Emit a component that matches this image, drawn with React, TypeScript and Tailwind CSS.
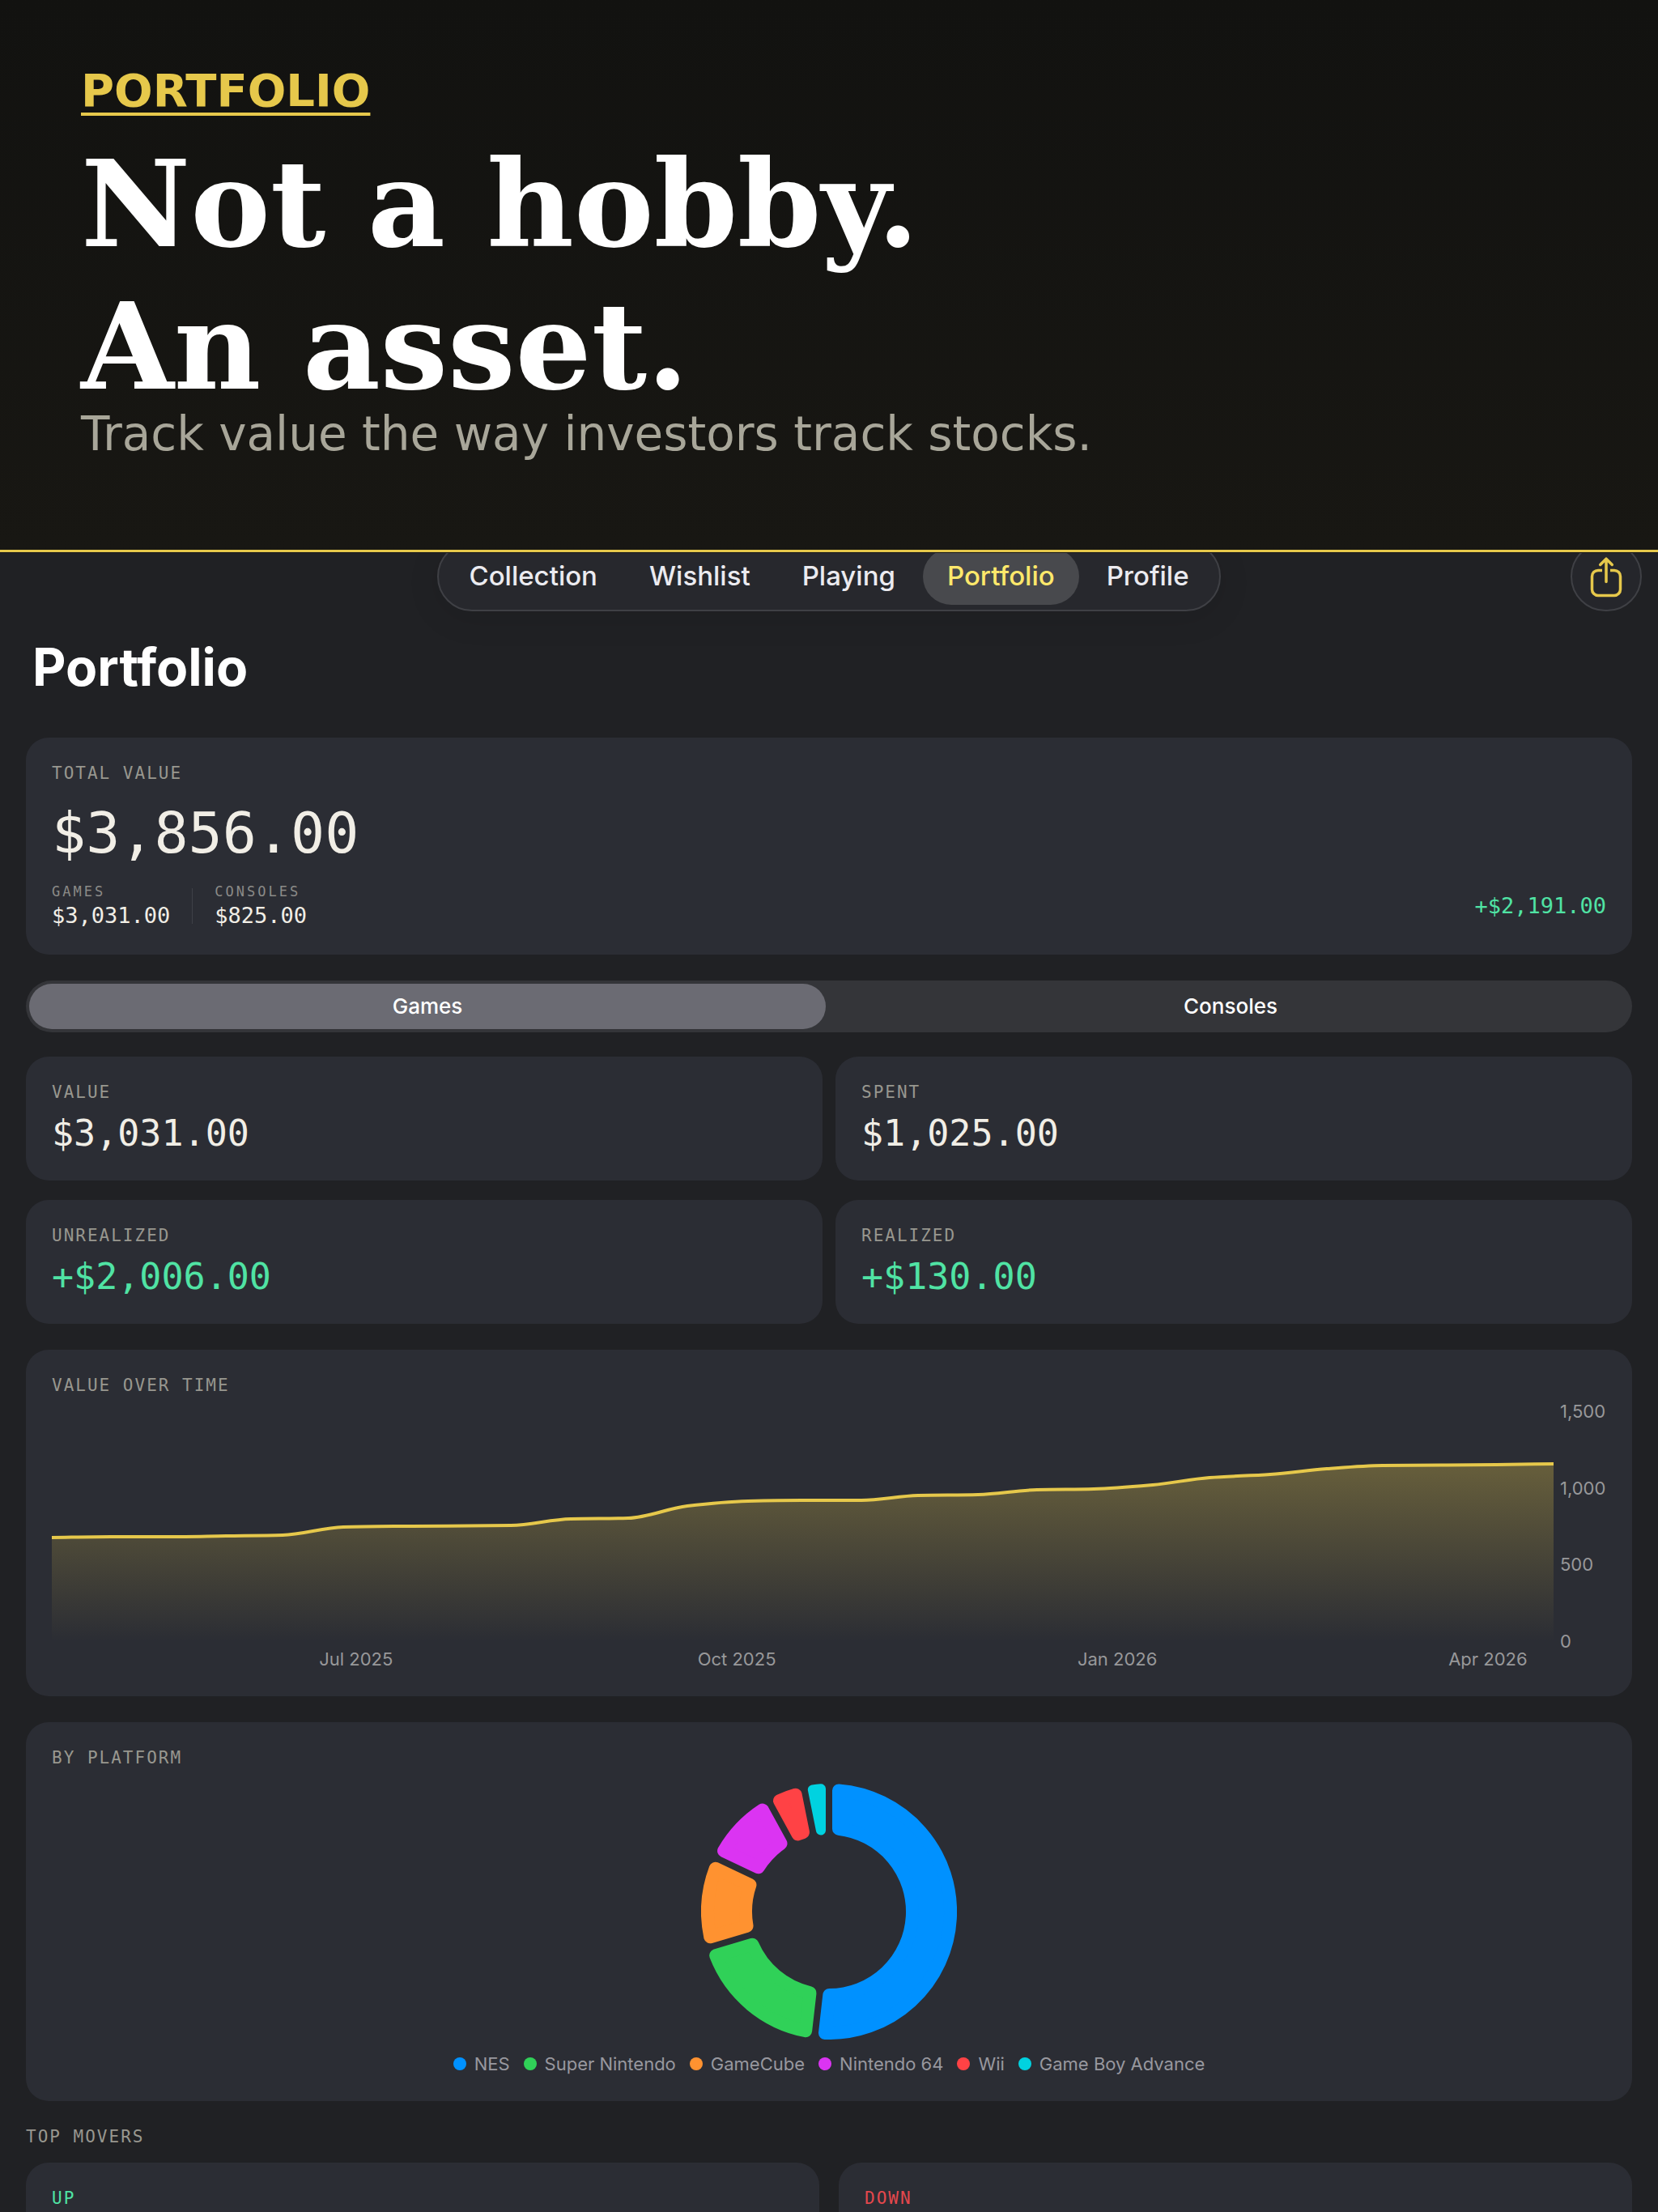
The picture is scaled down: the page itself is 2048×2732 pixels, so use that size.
import { useState } from 'react';

const NAV_ITEMS = ['Collection', 'Wishlist', 'Playing', 'Portfolio', 'Profile'];

const STATS = [
  { label: 'Value', value: '$3,031.00', gain: false },
  { label: 'Spent', value: '$1,025.00', gain: false },
  { label: 'Unrealized', value: '+$2,006.00', gain: true },
  { label: 'Realized', value: '+$130.00', gain: true },
];

// x and y in chart pixels, y measured down from the 1,500 mark
const HISTORY: [number, number][] = [
  [0, 156], [73, 155], [145, 155], [215, 154], [285, 153], [360, 143], [432, 142], [567, 141],
  [641, 133], [712, 132], [785, 117], [860, 111], [926, 110], [1000, 110], [1070, 104],
  [1144, 103], [1217, 97], [1287, 96], [1360, 91], [1430, 82], [1505, 78], [1575, 71],
  [1644, 67], [1784, 66], [1855, 65],
];

// angles are clockwise degrees from the top
const PLATFORMS = [
  { name: 'NES', start: 0, end: 186.5, fill: '#0091ff' },
  { name: 'Super Nintendo', start: 186.5, end: 253.4, fill: '#30d158' },
  { name: 'GameCube', start: 253.4, end: 295.4, fill: '#ff9230' },
  { name: 'Nintendo 64', start: 295.4, end: 331.4, fill: '#db34f2' },
  { name: 'Wii', start: 331.4, end: 348.6, fill: '#ff4245' },
  { name: 'Game Boy Advance', start: 348.6, end: 360, fill: '#00d2e0' },
];

// Monotone cubic through the points, so flat stretches never overshoot
function smoothPath(points: [number, number][]) {
  const slopes = points.slice(1).map(([x, y], i) => (y - points[i][1]) / (x - points[i][0]));
  const tangents = points.map((_, i) => {
    if (i === 0) return slopes[0];
    if (i === points.length - 1) return slopes[i - 1];
    const a = slopes[i - 1];
    const b = slopes[i];
    return a * b <= 0 ? 0 : (2 * a * b) / (a + b);
  });
  return points.reduce((path, [x, y], i) => {
    if (i === 0) return `M${x} ${y}`;
    const [px, py] = points[i - 1];
    const step = (x - px) / 3;
    const c1 = `${px + step} ${py + tangents[i - 1] * step}`;
    const c2 = `${x - step} ${y - tangents[i] * step}`;
    return `${path} C${c1} ${c2} ${x} ${y}`;
  }, '');
}

const OUTER = 158;
const INNER = 95;
const HALF_GAP = 4;

// The wedge is inset by the corner radius, then stroked with round joins to get it back
function wedge(startDeg: number, endDeg: number) {
  const start = (startDeg * Math.PI) / 180;
  const end = (endDeg * Math.PI) / 180;
  const innerHalf = INNER * Math.sin(Math.min(end - start, 1) / 2) - HALF_GAP;
  const corner = Math.min(8, innerHalf + 0.6);
  const edge = HALF_GAP + corner;
  const point = (radius: number, angle: number) =>
    `${(radius * Math.sin(angle)).toFixed(2)} ${(-radius * Math.cos(angle)).toFixed(2)}`;
  const ro = OUTER - corner;
  const ri = INNER + corner;
  const ao = Math.asin(edge / ro);
  const ai = Math.asin(edge / ri);
  const isLarge = (inset: number) => (end - start - 2 * inset > Math.PI ? 1 : 0);
  const d = [
    `M${point(ro, start + ao)}`,
    `A${ro} ${ro} 0 ${isLarge(ao)} 1 ${point(ro, end - ao)}`,
    `L${point(ri, end - ai)}`,
    `A${ri} ${ri} 0 ${isLarge(ai)} 0 ${point(ri, start + ai)}`,
    'Z',
  ].join(' ');
  return { d, corner };
}

function CardLabel({ children, tone = 'text-[#98978f]' }: { children: string; tone?: string }) {
  return (
    <h2 className={`font-['DejaVu_Sans_Mono',monospace] text-[21px] leading-6 tracking-[2px] uppercase ${tone}`}>
      {children}
    </h2>
  );
}

function Hero() {
  return (
    <header className="border-b-3 border-[#e6c84b] bg-linear-to-b from-[#121210] to-[#181713] px-[100px] pt-20 pb-[123px]">
      <p className="font-['DejaVu_Sans',sans-serif] text-[56px] leading-[64px] font-bold text-[#e6c84b] underline decoration-4 underline-offset-8">
        PORTFOLIO
      </p>
      <h1 className="mt-5 font-['DejaVu_Serif',serif] text-[148px] leading-[176px] font-bold text-white">
        Not a hobby.
        <br />
        An asset.
      </h1>
      <p className="font-['DejaVu_Sans',sans-serif] text-[58px] leading-10 text-[#a8a699]">
        Track value the way investors track stocks.
      </p>
    </header>
  );
}

function TopBar() {
  return (
    <div className="-mt-[14px] grid grid-cols-[1fr_auto_1fr] items-center px-5">
      <nav className="col-start-2 flex h-[86px] items-center gap-1 rounded-full border-2 border-[#3f4045] bg-[#27282d] px-[7px] shadow-[0_8px_40px_rgba(0,0,0,0.1)]">
        {NAV_ITEMS.map((item) => (
          <a
            key={item}
            href={`#${item.toLowerCase()}`}
            className={`flex h-[70px] items-center rounded-full px-[30px] text-[33px] font-medium ${
              item === 'Portfolio' ? 'bg-[#48494d] text-[#ffe86b]' : 'text-[#ebebf0]'
            }`}
          >
            {item}
          </a>
        ))}
      </nav>
      <button
        type="button"
        aria-label="Share"
        className="flex h-[86px] w-[88px] items-center justify-center justify-self-end rounded-full border-2 border-[#3f4045] bg-[#25262b]"
      >
        <svg viewBox="0 0 40 52" className="h-[52px] w-10" fill="none" stroke="#e6c84b" strokeWidth="3.5" strokeLinecap="round" strokeLinejoin="round">
          <path strokeLinecap="butt" d="M15 18.4H10a7.5 7.5 0 0 0-7.5 7.5v16a7.5 7.5 0 0 0 7.5 7.5h20a7.5 7.5 0 0 0 7.5-7.5v-16a7.5 7.5 0 0 0-7.5-7.5h-5" />
          <path d="M20 32.5V4.5M12.7 11.5 20 4.2l7.3 7.3" />
        </svg>
      </button>
    </div>
  );
}

function TotalCard() {
  return (
    <section className="rounded-[28px] bg-[#2b2d34] p-8">
      <CardLabel>Total value</CardLabel>
      <p className="mt-5 font-['DejaVu_Sans_Mono',monospace] text-[70px] leading-[84px] text-[#f1eee6]">$3,856.00</p>
      <div className="mt-5 flex items-center justify-between font-['DejaVu_Sans_Mono',monospace]">
        <dl className="flex items-center">
          <div className="flex flex-col gap-1 pr-[27px]">
            <dt className="text-[17px] leading-5 tracking-[3px] text-[#8b8b88]">GAMES</dt>
            <dd className="text-[27px] leading-8 text-[#f1eee6]">$3,031.00</dd>
          </div>
          <div className="h-11 w-px bg-[#3f4147]" />
          <div className="flex flex-col gap-1 pl-[27px]">
            <dt className="text-[17px] leading-5 tracking-[3px] text-[#8b8b88]">CONSOLES</dt>
            <dd className="text-[27px] leading-8 text-[#f1eee6]">$825.00</dd>
          </div>
        </dl>
        <p className="text-[27px] leading-8 text-[#50e3a4]">+$2,191.00</p>
      </div>
    </section>
  );
}

function Segments() {
  const [active, setActive] = useState('Games');
  return (
    <div className="mt-8 grid h-16 grid-cols-2 gap-2 rounded-full bg-[#343539] p-1">
      {['Games', 'Consoles'].map((name) => (
        <button
          key={name}
          type="button"
          aria-pressed={active === name}
          onClick={() => setActive(name)}
          className={`rounded-full text-[26px] leading-8 font-medium text-white ${active === name ? 'bg-[#6b6b73]' : ''}`}
        >
          {name}
        </button>
      ))}
    </div>
  );
}

function StatGrid() {
  return (
    <div className="mt-[30px] grid grid-cols-2 gap-x-4 gap-y-6">
      {STATS.map((stat) => (
        <section key={stat.label} className="flex flex-col gap-3 rounded-[28px] bg-[#2b2d34] p-8">
          <CardLabel>{stat.label}</CardLabel>
          <p className={`font-['DejaVu_Sans_Mono',monospace] text-[45px] leading-[53px] ${stat.gain ? 'text-[#50e3a4]' : 'text-[#f1eee6]'}`}>
            {stat.value}
          </p>
        </section>
      ))}
    </div>
  );
}

function HistoryCard() {
  const line = smoothPath(HISTORY);
  return (
    <section className="mt-8 rounded-[28px] bg-[#2b2d34] p-8">
      <CardLabel>Value over time</CardLabel>
      <div className="mt-5 grid grid-cols-[1fr_57px] gap-x-2 text-[22px] text-[#98989a]">
        <svg viewBox="0 0 1855 284" preserveAspectRatio="none" className="h-[284px] w-full overflow-visible" role="img" aria-label="Value over time chart">
          <defs>
            <linearGradient id="fade" x1="0" y1="65" x2="0" y2="284" gradientUnits="userSpaceOnUse">
              <stop offset="0" stopColor="#e6c84b" stopOpacity="0.32" />
              <stop offset="1" stopColor="#e6c84b" stopOpacity="0" />
            </linearGradient>
          </defs>
          <path d={`${line} V284 H0 Z`} fill="url(#fade)" />
          <path d={line} fill="none" stroke="#e6c84b" strokeWidth="4" />
        </svg>
        <div className="-my-3 flex flex-col justify-between leading-6">
          <span>1,500</span>
          <span>1,000</span>
          <span>500</span>
          <span>0</span>
        </div>
        <div className="mt-2 grid grid-cols-[178fr_252fr_253fr_247fr_70fr] leading-7 whitespace-nowrap">
          <span className="col-start-2">Jul 2025</span>
          <span>Oct 2025</span>
          <span>Jan 2026</span>
          <span>Apr 2026</span>
        </div>
      </div>
    </section>
  );
}

function PlatformCard() {
  return (
    <section className="mt-8 rounded-[28px] bg-[#2b2d34] p-8">
      <CardLabel>By platform</CardLabel>
      <svg viewBox="-158 -158 316 316" className="mx-auto mt-5 size-[316px]" role="img" aria-label="Value by platform">
        {PLATFORMS.map((platform) => {
          const { d, corner } = wedge(platform.start, platform.end);
          return (
            <path key={platform.name} d={d} fill={platform.fill} stroke={platform.fill} strokeWidth={corner * 2} strokeLinejoin="round" />
          );
        })}
      </svg>
      <ul className="mt-4 flex justify-center gap-[17px] text-[22px] leading-7 text-[#98989f]">
        {PLATFORMS.map((platform) => (
          <li key={platform.name} className="flex items-center gap-[10px]">
            <span className="size-4 rounded-full" style={{ backgroundColor: platform.fill }} />
            {platform.name}
          </li>
        ))}
      </ul>
    </section>
  );
}

export default function App() {
  return (
    <div className="h-screen overflow-hidden bg-[#202124] font-['Inter',sans-serif]">
      <Hero />
      <main className="overflow-hidden border-t border-[#19191a]">
        <TopBar />
        <div className="px-8 pt-[29px]">
          <h2 className="mb-[47px] px-2 text-[64px] leading-[80px] font-bold text-white">Portfolio</h2>
          <TotalCard />
          <Segments />
          <StatGrid />
          <HistoryCard />
          <PlatformCard />
          <div className="mt-8">
            <CardLabel>Top movers</CardLabel>
          </div>
          <div className="mt-5 grid grid-cols-2 gap-6">
            <section className="rounded-[28px] bg-[#2b2d34] p-8">
              <CardLabel tone="text-[#50e3a4]">Up</CardLabel>
            </section>
            <section className="rounded-[28px] bg-[#2b2d34] p-8">
              <CardLabel tone="text-[#e5484d]">Down</CardLabel>
            </section>
          </div>
        </div>
      </main>
    </div>
  );
}
